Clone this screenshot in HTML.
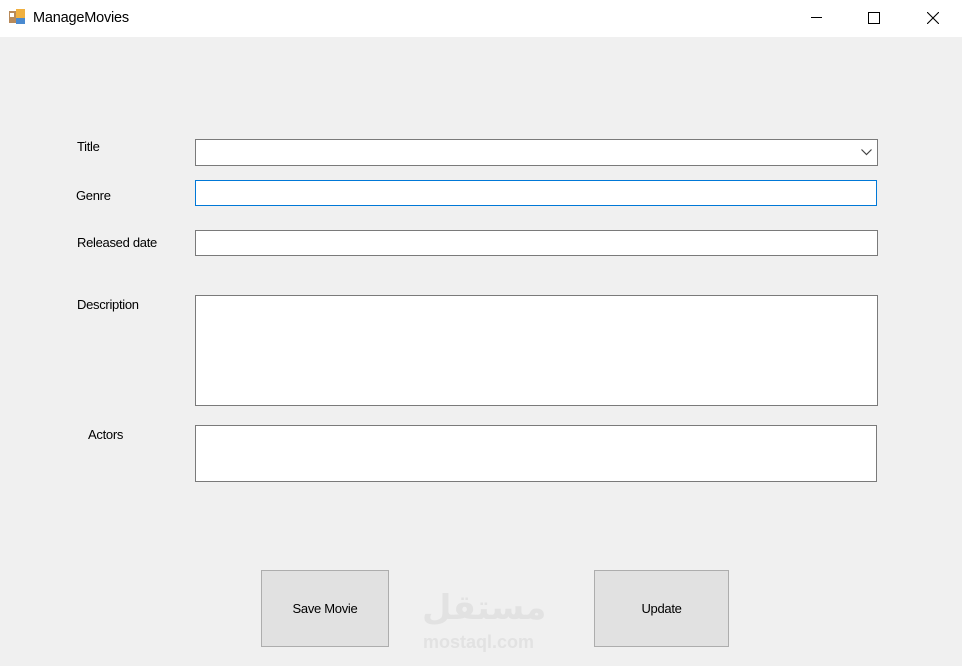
<!DOCTYPE html>
<html><head><style>
body{margin:0;width:962px;height:666px;background:#f0f0f0;font-family:"Liberation Sans",sans-serif;position:relative;overflow:hidden}
.t{position:absolute;left:0;top:0;width:962px;height:37px;background:#fff}
.a{position:absolute}
.lbl{position:absolute;font-size:13px;color:#000;letter-spacing:-0.3px}
.box{position:absolute;background:#fff;border:1px solid #7a7a7a;box-sizing:border-box}
.btn{position:absolute;background:#e1e1e1;border:1px solid #adadad;box-sizing:border-box;font-size:13px;display:flex;align-items:center;justify-content:center;letter-spacing:-0.3px}
</style></head><body>
<div class="t">
<svg class="a" style="left:9px;top:9px" width="18" height="17"><rect x="0" y="2" width="8" height="12" fill="#b88a5a"/><rect x="7" y="0" width="9" height="9" fill="#f0b040"/><rect x="7" y="9" width="9" height="6" fill="#4a8ad0"/><rect x="1" y="4" width="4" height="4" fill="#fff"/></svg>
<div class="a" style="left:33px;top:10px;font-size:14.5px;letter-spacing:-0.2px">ManageMovies</div>
<div class="a" style="left:811px;top:17px;width:11px;height:1px;background:#000"></div>
<div class="a" style="left:868px;top:12px;width:10px;height:10px;border:1px solid #000"></div>
<svg class="a" style="left:927px;top:12px" width="12" height="12"><path d="M0 0L12 12M12 0L0 12" stroke="#000" stroke-width="1.1"/></svg>
</div>
<div class="lbl" style="left:77px;top:139px">Title</div>
<div class="lbl" style="left:76px;top:188px">Genre</div>
<div class="lbl" style="left:77px;top:235px">Released date</div>
<div class="lbl" style="left:77px;top:297px">Description</div>
<div class="lbl" style="left:88px;top:427px">Actors</div>
<div class="box" style="left:195px;top:139px;width:683px;height:27px"><svg class="a" style="left:665px;top:9px" width="11" height="7"><path d="M0.5 0.5L5.5 5.5L10.5 0.5" stroke="#444" fill="none" stroke-width="1.2"/></svg></div>
<div class="box" style="left:195px;top:180px;width:682px;height:26px;border-color:#0078d7"></div>
<div class="box" style="left:195px;top:230px;width:683px;height:26px"></div>
<div class="box" style="left:195px;top:295px;width:683px;height:111px"></div>
<div class="box" style="left:195px;top:425px;width:682px;height:57px"></div>
<div class="btn" style="left:261px;top:570px;width:128px;height:77px">Save Movie</div>
<div class="btn" style="left:594px;top:570px;width:135px;height:77px">Update</div>
<div class="a" style="left:422px;top:588px;font-size:34px;font-weight:bold;color:#e2e2e2;font-family:'DejaVu Sans',sans-serif">مستقل</div>
<div class="a" style="left:423px;top:632px;font-size:18px;font-weight:bold;color:#e2e2e2">mostaql.com</div>
</body></html>
